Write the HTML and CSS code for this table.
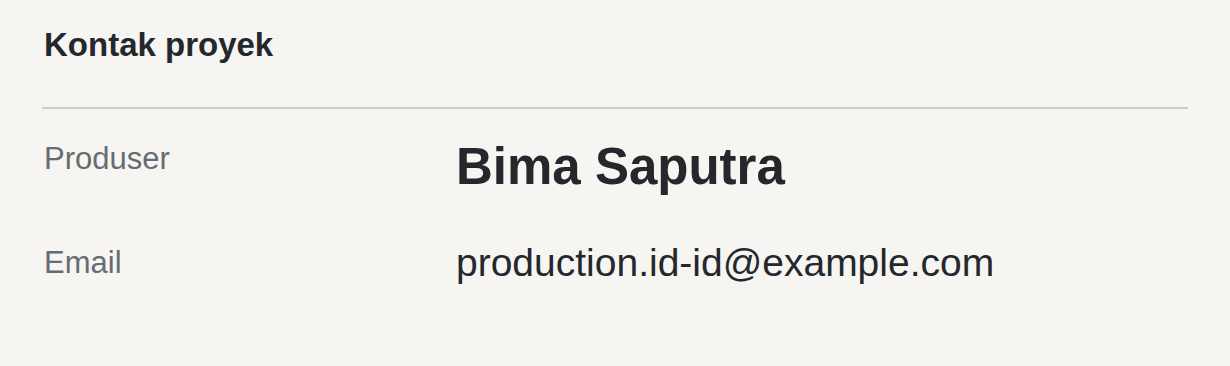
FILE: index.html
```html
<!DOCTYPE html>
<html lang="id">
<head>
    <meta charset="UTF-8">
    <meta name="viewport" content="width=device-width, initial-scale=1.0">
    <title>Kontak proyek</title>
    <link rel="stylesheet" href="styles.css">
</head>
<body>
    <section class="kontak">
        <h2 class="judul">Kontak proyek</h2>
        <div class="daftar">
            <div class="baris">
                <span class="label">Produser</span>
                <span class="nilai nama">Bima Saputra</span>
            </div>
            <div class="baris">
                <span class="label">Email</span>
                <span class="nilai email">production.id-id@example.com</span>
            </div>
        </div>
    </section>
</body>
</html>
```

FILE: styles.css
```css
body {
    margin: 0;
    background: #f6f5f1;
    color: #24282d;
    font-family: "Liberation Sans", Arial, sans-serif;
}
.kontak {
    padding: 0 42px;
}
.judul {
    margin: 0;
    padding: 25px 2px 42px;
    font-size: 33px;
    line-height: 40px;
    font-weight: bold;
    border-bottom: 2px solid #cbcbc7;
}
.daftar {
    display: flex;
    flex-direction: column;
    gap: 43px;
    padding: 27px 2px 0;
}
.baris {
    display: grid;
    grid-template-columns: 412px 1fr;
    align-items: start;
}
.label {
    font-size: 31px;
    line-height: 1.5;
    color: #676c72;
}
.nilai {
    line-height: 1.2;
}
.nama {
    font-size: 51px;
    font-weight: bold;
}
.email {
    font-size: 39px;
}
```
